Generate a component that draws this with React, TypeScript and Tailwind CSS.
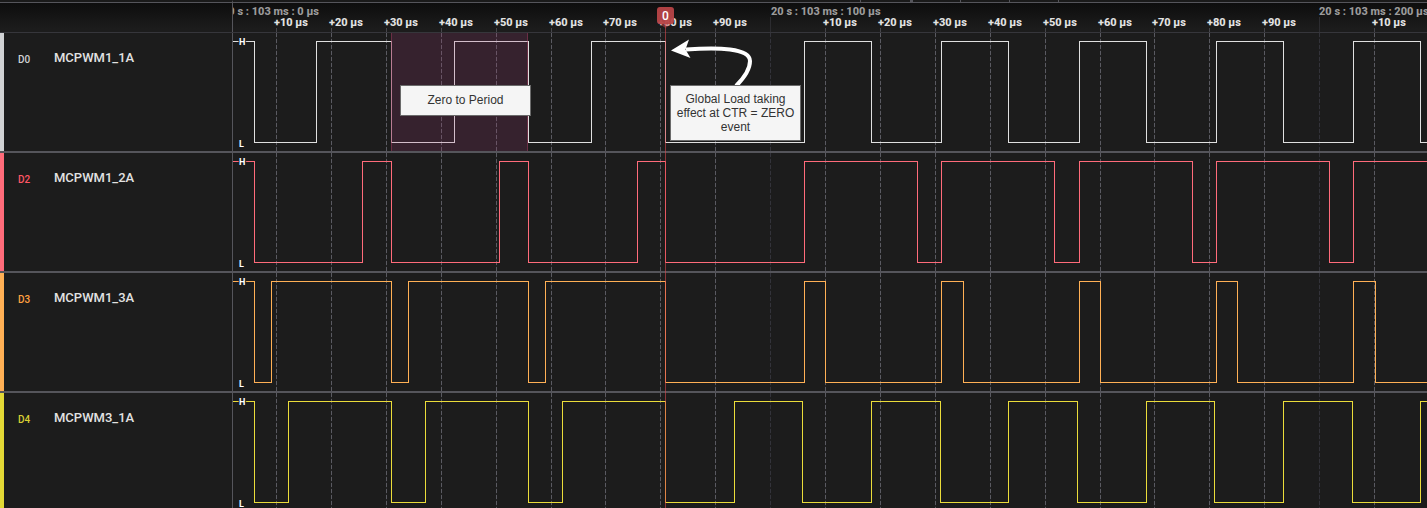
type Channel = { id: string; name: string; color: string; bar: string; label: string; edges: number[] };

// Edge positions are in pixels from the left side of the plot; every signal starts high.
const channels: Channel[] = [
  {
    id: 'D0', name: 'MCPWM1_1A', color: '#e0e0e0', bar: 'bg-[#d0d2d4]', label: 'text-[#d0d2d4]',
    edges: [21, 83, 158, 221, 295, 358, 432, 571, 638, 708, 775, 846, 913, 983, 1050, 1120, 1187],
  },
  {
    id: 'D2', name: 'MCPWM1_2A', color: '#ff6b7a', bar: 'bg-[#ff6b7a]', label: 'text-[#ff5564]',
    edges: [21, 129, 158, 266, 295, 404, 432, 571, 684, 708, 821, 846, 959, 983, 1096, 1120],
  },
  {
    id: 'D3', name: 'MCPWM1_3A', color: '#ffb055', bar: 'bg-[#ffb055]', label: 'text-[#ffa040]',
    edges: [21, 38, 158, 175, 295, 312, 432, 571, 592, 708, 730, 846, 867, 983, 1004, 1120, 1142],
  },
  {
    id: 'D4', name: 'MCPWM3_1A', color: '#ebdc3a', bar: 'bg-[#e3d936]', label: 'text-[#d9cf34]',
    edges: [21, 55, 158, 192, 295, 329, 432, 501, 569, 638, 707, 775, 844, 913, 981, 1050, 1119, 1187],
  },
];

const HIGH = 8;
const LOW = 109;

const ticks = [
  43, 98, 153, 208, 263, 318, 372, 427, 482, 537, 592, 647, 702, 757, 812, 867, 921, 976, 1031, 1086, 1141,
  1196, 1251, 1306, 1361, 1416, 1470, 1525, 1580, 1635,
].map((x, i) => ({ x, step: (i + 1) % 10 }));

const majors = [
  { x: -11, text: '20 s : 103 ms : 0 µs' },
  { x: 538, text: '20 s : 103 ms : 100 µs' },
  { x: 1086, text: '20 s : 103 ms : 200 µs' },
];

function wavePath(edges: number[]) {
  let level = HIGH;
  let d = `M0 ${HIGH}.5`;
  for (const x of edges) {
    level = level === HIGH ? LOW : HIGH;
    d += `H${x}.5V${level}.5`;
  }
  return d + 'H3000';
}

function Gridlines() {
  return (
    <g shapeRendering="crispEdges">
      {ticks.map(({ x, step }) => (
        <g key={x} stroke={step === 0 ? '#33333a' : '#5a5a61'}>
          <line x1={x + 0.5} x2={x + 0.5} y1={0} y2={118} strokeOpacity={0.15} />
          <line x1={x + 0.5} x2={x + 0.5} y1={0} y2={118} strokeDasharray="4 2" />
        </g>
      ))}
    </g>
  );
}

function Ruler() {
  return (
    <header className="flex h-[33px] border-b border-[#36363b] bg-linear-to-b from-[#0c0c0c] to-[#1c1c1c] to-90%">
      <div className="w-[233px] shrink-0 border-t-2 border-r border-t-[#1a1a1a] border-r-[#55555b]">
        <div className="h-px bg-[#55555b]" />
      </div>
      <div className="min-w-0 grow">
        <svg className="block h-8 w-full" role="img" aria-label="Time ruler">
          <rect width="100%" height="2" fill="#1a1a1a" />
          <rect y="2" width="100%" height="1" fill="#55555b" />
          {[627, 677, 727, 776, 825].map((x) => (
            <rect key={x} x={x} y="0" width={x === 677 ? 3 : 1} height="2" fill="#55555b" />
          ))}
          {ticks.map(({ x, step }) => (
            <rect key={x} x={x} y={step === 0 ? 17 : 28} width="1" height="15" fill={step === 0 ? '#2c2c30' : '#46464b'} />
          ))}
          <g className="font-['Roboto',sans-serif] text-[11px] font-extrabold">
            {majors.map(({ x, text }) => (
              <text key={text} x={x} y="15" fill="#9b9b9b">{text}</text>
            ))}
            {ticks.filter(({ step }) => step !== 0).map(({ x, step }) => (
              <text key={x} x={x - 2} y="26" fill="#e2e2e2">{`+${step}0 µs`}</text>
            ))}
          </g>
        </svg>
      </div>
    </header>
  );
}

function ChannelRow({ channel, highlighted }: { channel: Channel; highlighted: boolean }) {
  return (
    <section className="flex h-[120px] border-b-2 border-[#55555b]">
      <div className="flex w-[233px] shrink-0 border-r border-[#55555b]">
        <div className={`w-1 ${channel.bar}`} />
        <div className="flex items-start pt-4 pl-[14px] font-['Roboto',sans-serif]">
          <span className={`w-9 text-[10px] leading-[22px] font-medium ${channel.label}`}>{channel.id}</span>
          <h2 className="text-[13px] leading-[18px] font-medium text-[#e2e2e2]">{channel.name}</h2>
        </div>
      </div>
      <div className="min-w-0 grow">
        <svg className="block h-full w-full" role="img" aria-label={`${channel.name} waveform`}>
          <Gridlines />
          <path d={wavePath(channel.edges)} fill="none" stroke={channel.color} shapeRendering="crispEdges" />
          {highlighted && (
            <g shapeRendering="crispEdges">
              <rect x="158" y="0" width="137" height="118" fill="#a03c78" fillOpacity="0.2" />
              <path d="M158.5 0V118M294.5 0V118" stroke="#a03c5c" strokeOpacity="0.5" />
            </g>
          )}
          <g className="font-['Roboto',sans-serif] text-[9px] font-bold" fill="#ffffff" stroke="#1c1c1c" strokeWidth="2" paintOrder="stroke">
            <text x="6" y="12">H</text>
            <text x="6" y="114">L</text>
          </g>
        </svg>
      </div>
    </section>
  );
}

export default function App() {
  return (
    <main className="relative h-screen overflow-hidden bg-[#1c1c1c]">
      <Ruler />
      {channels.map((channel) => (
        <ChannelRow key={channel.id} channel={channel} highlighted={channel.id === 'D0'} />
      ))}
      <div className="absolute top-[24px] bottom-0 left-[665px] w-px bg-[#d9494f]/60" />
      <svg className="absolute top-[20px] left-[657px] h-2 w-[17px]" viewBox="0 0 17 8" aria-hidden="true">
        <path d="M1 3H16L8.500 8Z" fill="#c94a4c" fillOpacity="0.5" />
      </svg>
      <div className="absolute top-[7px] left-[657px] h-[17px] w-[17px] rounded-[3px] bg-[#b84547]/95 text-center font-['Roboto',sans-serif] text-[12px] leading-[18px] font-medium text-white">
        0
      </div>
      <svg className="absolute top-[36px] left-[666px] h-[52px] w-[92px]" viewBox="666 36 92 52" aria-hidden="true">
        <path d="M736 86C746 76 750 69 750 61C750 48 718 47 686 49.500" fill="none" stroke="#ffffff" strokeWidth="4" />
        <path d="M671 50.500L689 39.500L685.500 49.500L690.500 58Z" fill="#ffffff" />
      </svg>
      <p className="absolute top-[85px] left-[400px] w-[131px] border border-[#6b6b6b] bg-[#f5f5f5] pt-[7px] pb-2 text-center font-['Liberation_Sans',sans-serif] text-[12px] leading-[14px] text-[#333333]">
        Zero to Period
      </p>
      <p className="absolute top-[85px] left-[670px] w-[131px] border border-[#6b6b6b] bg-[#f5f5f5] px-1 py-[6px] text-center font-['Liberation_Sans',sans-serif] text-[12px] leading-[14px] text-[#333333]">
        Global Load taking effect at CTR = ZERO event
      </p>
    </main>
  );
}
